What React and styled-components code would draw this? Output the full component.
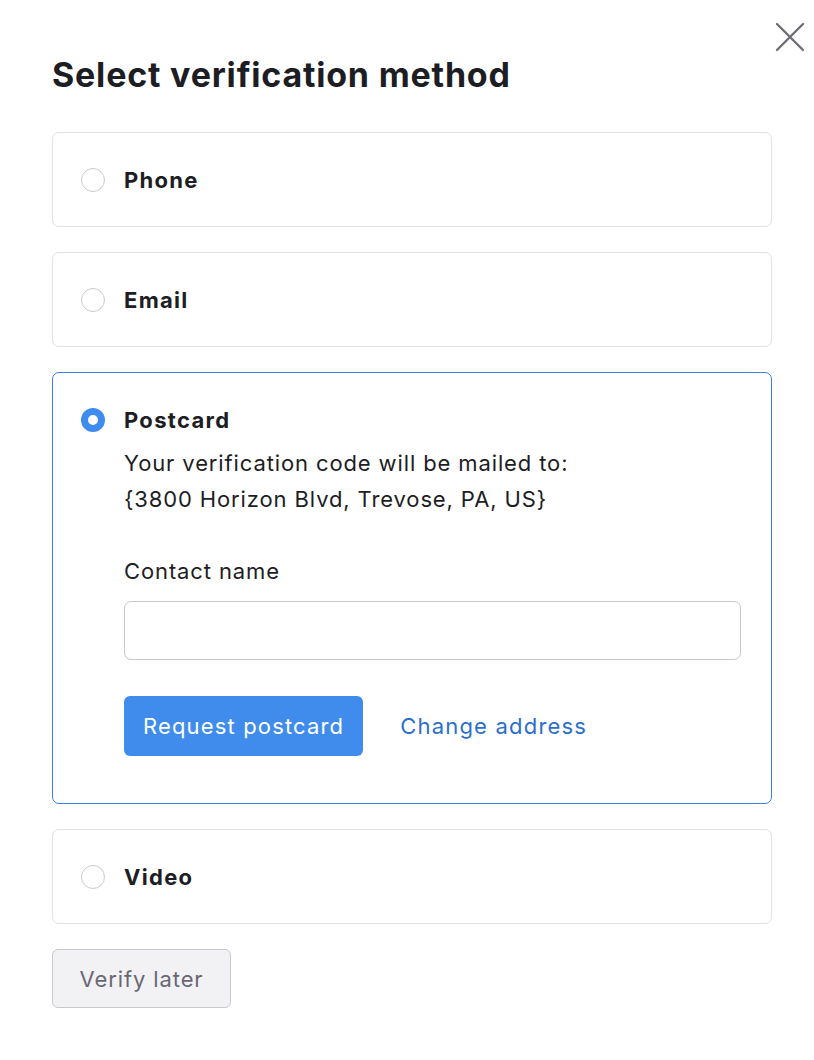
import React from 'react';
import styled, { createGlobalStyle, css } from 'styled-components';

const GlobalStyle = createGlobalStyle`
  html, body { margin: 0; padding: 0; background: #fff; }
  body { font-family: Inter, "Noto Sans", sans-serif; color: #1d1d24; }
  * { box-sizing: border-box; }
`;

const methods = ['Phone', 'Email', 'Postcard', 'Video'];

export default function App() {
  const [selected, setSelected] = React.useState('Postcard');
  const [name, setName] = React.useState('');

  return (
    <>
      <GlobalStyle />
      <Dialog>
        <CloseButton aria-label="Close">
          <svg width="30" height="30" viewBox="0 0 30 30">
            <path d="M2 2 L28 28 M28 2 L2 28" stroke="#6e6e78" strokeWidth="2.4" strokeLinecap="round" />
          </svg>
        </CloseButton>
        <Title>Select verification method</Title>
        <List>
          {methods.map((m) => (
            <Card key={m} $active={selected === m} onClick={() => setSelected(m)}>
              <Row>
                <Radio $active={selected === m} />
                <Label>{m}</Label>
              </Row>
              {selected === m && m === 'Postcard' && (
                <Body>
                  <Text>
                    Your verification code will be mailed to:
                    <br />
                    {'{3800 Horizon Blvd, Trevose, PA, US}'}
                  </Text>
                  <FieldLabel>Contact name</FieldLabel>
                  <Input value={name} onChange={(e) => setName(e.target.value)} />
                  <Actions>
                    <PrimaryButton>Request postcard</PrimaryButton>
                    <LinkButton>Change address</LinkButton>
                  </Actions>
                </Body>
              )}
            </Card>
          ))}
        </List>
        <SecondaryButton>Verify later</SecondaryButton>
      </Dialog>
    </>
  );
}

const Dialog = styled.div`
  position: relative;
  width: 814px;
  padding: 54px 42px 52px 52px;
`;

const CloseButton = styled.button`
  position: absolute;
  top: 22px;
  right: 9px;
  width: 30px;
  height: 30px;
  padding: 0;
  border: none;
  background: none;
  cursor: pointer;
  display: flex;
`;

const Title = styled.h1`
  margin: 0 0 36px;
  font-size: 34px;
  line-height: 42px;
  font-weight: 700;
  letter-spacing: 0.8px;
  color: #1d1d24;
`;

const List = styled.div`
  display: flex;
  flex-direction: column;
  gap: 25px;
  width: 720px;
`;

const Card = styled.div`
  border: 1px solid #e2e2e7;
  border-radius: 7px;
  padding: 29px 30px 28px 28px;
  cursor: pointer;
  ${(p) =>
    p.$active &&
    css`
      border-color: #3b7fd9;
      padding-bottom: 47px;
    `}
`;

const Row = styled.div`
  display: flex;
  align-items: center;
  gap: 19px;
  height: 36px;
`;

const Radio = styled.span`
  width: 24px;
  height: 24px;
  border-radius: 50%;
  flex: none;
  border: 1.5px solid #c9c9d0;
  background: #fff;
  ${(p) =>
    p.$active &&
    css`
      border: 7px solid #3d8cee;
    `}
`;

const Label = styled.span`
  font-size: 22px;
  font-weight: 700;
  letter-spacing: 1.3px;
  color: #1d1d24;
`;

const Body = styled.div`
  padding-left: 43px;
  margin-top: 7px;
  cursor: default;
`;

const Text = styled.p`
  margin: 0;
  font-size: 22px;
  line-height: 36px;
  letter-spacing: 0.88px;
  color: #1d1d24;
`;

const FieldLabel = styled.div`
  margin-top: 36px;
  font-size: 22px;
  line-height: 36px;
  letter-spacing: 0.88px;
`;

const Input = styled.input`
  display: block;
  margin-top: 12px;
  width: 617px;
  height: 59px;
  border: 1.5px solid #c8c8ce;
  border-radius: 7px;
  font-size: 22px;
  font-family: inherit;
  padding: 0 16px;
  outline: none;
`;

const Actions = styled.div`
  display: flex;
  align-items: center;
  gap: 37px;
  margin-top: 36px;
`;

const PrimaryButton = styled.button`
  height: 60px;
  padding: 0 19px;
  border: none;
  border-radius: 6px;
  background: #3f8ced;
  color: #fff;
  font-family: inherit;
  font-size: 22px;
  letter-spacing: 1.15px;
  cursor: pointer;
`;

const LinkButton = styled.button`
  border: none;
  background: none;
  padding: 0;
  color: #2b6fcd;
  font-family: inherit;
  font-size: 22px;
  letter-spacing: 1.2px;
  cursor: pointer;
`;

const SecondaryButton = styled.button`
  margin-top: 25px;
  width: 179px;
  height: 59px;
  border: 1.5px solid #c8c8ce;
  border-radius: 6px;
  background: #f2f2f5;
  color: #686874;
  font-family: inherit;
  font-size: 22px;
  letter-spacing: 0.9px;
  cursor: pointer;
`;
